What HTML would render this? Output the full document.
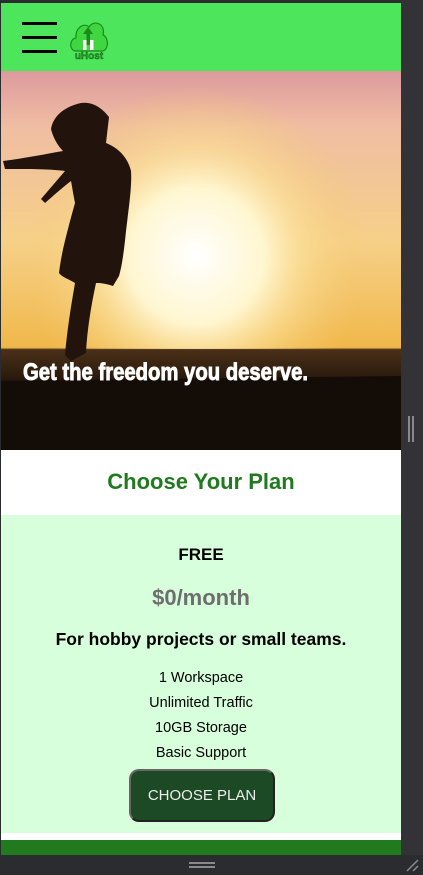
<!DOCTYPE html>
<html><head><meta charset="utf-8"><style>
*{margin:0;padding:0;box-sizing:border-box}
body{width:423px;height:875px;background:#2b2c2f;position:relative;overflow:hidden;font-family:"Liberation Sans",Arial,sans-serif}
#page{position:absolute;left:1px;top:3px;width:400px;height:852px;background:#fff;overflow:hidden}
.a{position:absolute}
.c{position:absolute;left:0;width:400px;text-align:center}
</style></head><body>
<div class="a" style="left:401px;top:0;width:22px;height:855px;background:#333337"></div>
<div class="a" style="left:408px;top:416px;width:2px;height:26px;background:#8a8a8e"></div>
<div class="a" style="left:412px;top:416px;width:2px;height:26px;background:#8a8a8e"></div>
<div class="a" style="left:189px;top:862px;width:26px;height:2px;background:#8a8a8e"></div>
<div class="a" style="left:189px;top:866px;width:26px;height:2px;background:#8a8a8e"></div>
<svg class="a" style="left:404px;top:858px" width="16" height="14"><path d="M3 13L14 2M9 13L14 8" stroke="#8a8a8e" stroke-width="1.5"/></svg>
<div id="page">
 <div class="a" style="left:0;top:0;width:400px;height:68px;background:#4de55c"></div>
 <div class="a" style="left:21px;top:19px;width:35px;height:3px;background:#000"></div>
 <div class="a" style="left:21px;top:33px;width:35px;height:3px;background:#000"></div>
 <div class="a" style="left:21px;top:47px;width:35px;height:3px;background:#000"></div>
 <svg class="a" style="left:67px;top:14px" width="42" height="44" viewBox="0 0 40 44">
  <path d="M7 34C0 34 0 22 7 21C6 11 15 5 20 10C25 2 37 7 34 18C40 20 40 34 33 34Z" fill="#3fd63f" stroke="#1e8a1e" stroke-width="1.2"/>
  <path d="M19 10L14 17H17.5V28H21V17H24Z" fill="#1a8a1a"/>
  <rect x="14" y="23" width="3.5" height="10" fill="#fff"/><rect x="21" y="23" width="3.5" height="10" fill="#fff"/>
  <text x="20" y="42" font-family="Liberation Sans" font-weight="bold" font-size="10" fill="#2a9a2a" stroke="#155a15" stroke-width="0.4" text-anchor="middle">uHost</text>
 </svg>
 <svg class="a" style="left:0;top:68px" width="400" height="379" viewBox="0 0 400 379">
  <defs>
   <linearGradient id="sky" x1="0" y1="0" x2="0" y2="1">
    <stop offset="0" stop-color="#dd9a9e"/><stop offset="0.15" stop-color="#f0bea2"/><stop offset="0.45" stop-color="#f6d088"/><stop offset="0.73" stop-color="#f0b84a"/><stop offset="0.735" stop-color="#4a3018"/><stop offset="0.8" stop-color="#2e1d0e"/><stop offset="0.83" stop-color="#1c120a"/><stop offset="1" stop-color="#0a0604"/>
   </linearGradient>
   <radialGradient id="sun" cx="195" cy="185" r="170" gradientUnits="userSpaceOnUse">
    <stop offset="0" stop-color="#ffffff"/><stop offset="0.4" stop-color="#fff6d0"/><stop offset="0.62" stop-color="#fbe09a" stop-opacity="0.7"/><stop offset="1" stop-color="#f5c870" stop-opacity="0"/>
   </radialGradient>
  </defs>
  <rect width="400" height="379" fill="url(#sky)"/>
  <rect width="400" height="278" fill="url(#sun)"/>
  <path d="M0 310L400 305V379H0Z" fill="#140c06"/>
  <path d="M80 32C92 30 102 38 108 46L105 72C115 76 126 84 130 100C131 115 128 135 125 160C123 180 121 195 118 205L112 215C103 212 98 212 95 212C90 235 86 260 85 282L70 290L64 284C66 260 70 235 74 212C68 208 62 207 58 202C60 185 64 168 74 132C72 122 71 115 70 110C62 116 52 125 44 132L40 128L64 100C50 98 30 98 4 98L2 90C25 87 45 83 62 80C56 74 52 66 50 58C52 46 62 36 80 32Z" fill="#22140c"/>
  <text x="22" y="309" font-family="Liberation Sans Narrow,Liberation Sans" font-weight="bold" font-size="24" fill="#fff" stroke="#fff" stroke-width="0.9" textLength="285" lengthAdjust="spacingAndGlyphs">Get the freedom you deserve.</text>
 </svg>
 <div class="c" style="top:466px;font-size:22px;font-weight:bold;color:#217a1f">Choose Your Plan</div>
 <div class="a" style="left:0;top:512px;width:400px;height:318px;background:#d8ffdc"></div>
 <div class="c" style="top:542px;font-size:17px;font-weight:bold;color:#000">FREE</div>
 <div class="c" style="top:582px;font-size:22px;font-weight:bold;color:#6e6e6e">$0/month</div>
 <div class="c" style="top:626px;font-size:17.5px;font-weight:bold;color:#000">For hobby projects or small teams.</div>
 <div class="c" style="top:667px;font-size:14.5px;color:#000">1 Workspace</div>
 <div class="c" style="top:692px;font-size:14.5px;color:#000">Unlimited Traffic</div>
 <div class="c" style="top:717px;font-size:14.5px;color:#000">10GB Storage</div>
 <div class="c" style="top:742px;font-size:14.5px;color:#000">Basic Support</div>
 <div class="a" style="left:128px;top:766px;width:146px;height:53px;background:#1b4a24;border:2px solid #666;border-right-color:#222;border-bottom-color:#222;border-radius:10px;color:#eee;font-size:15px;text-align:center;line-height:49px">CHOOSE PLAN</div>
 <div class="a" style="left:0;top:837px;width:400px;height:15px;background:#227a1f"></div>
</div>
</body></html>
